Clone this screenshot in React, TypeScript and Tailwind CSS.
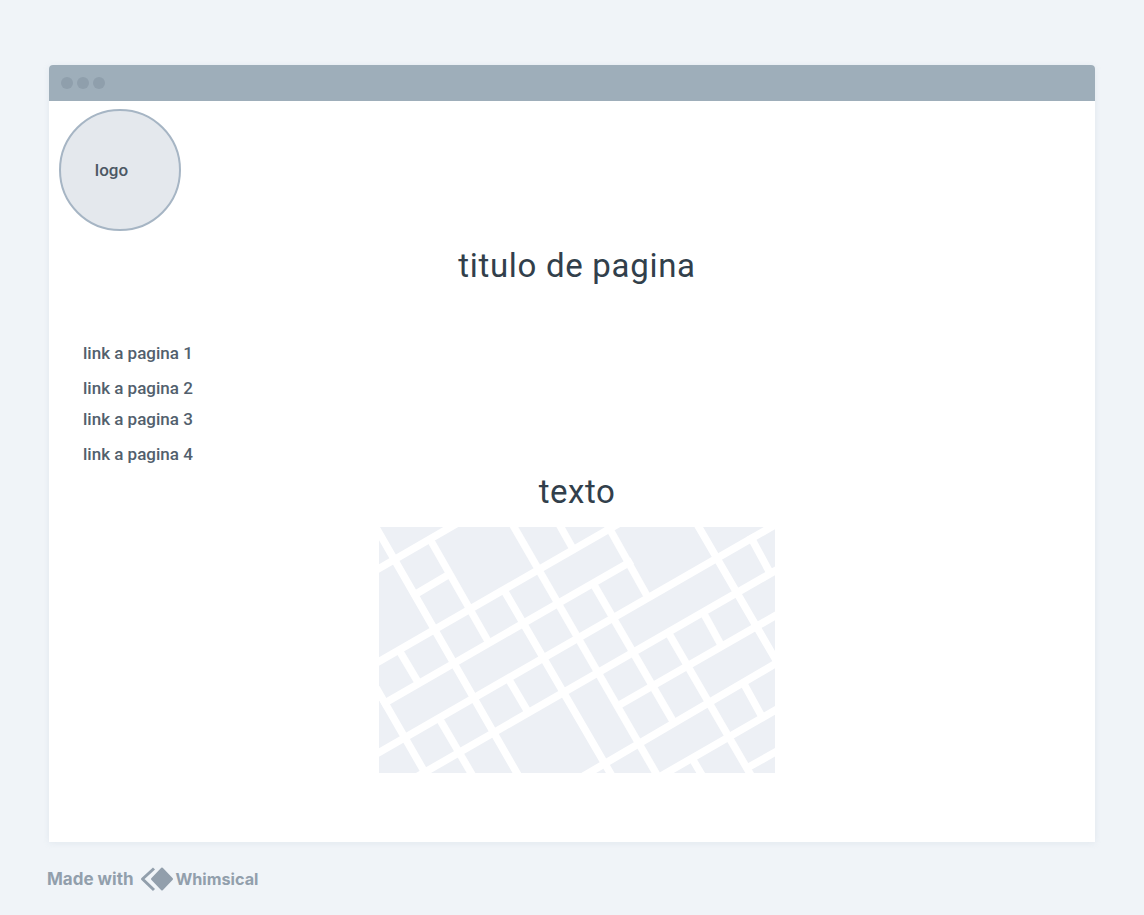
const lines: [number, number, number, number][] = [
  // up-right streets
  [379, 568.5, 456, 524],
  [415, 594.5, 449, 574.5],
  [379, 661.5, 618, 524],
  [385, 703, 629, 562.5],
  [379, 752.5, 780, 522],
  [420, 775, 780, 568],
  [575, 781, 780, 661],
  [660, 776.6, 780, 707.5],
  [748, 767.5, 780, 749.5],
  [618.5, 705.5, 780, 613],
  // down-right streets
  [375.7, 527, 518, 775],
  [431, 541, 488.5, 642],
  [514, 527, 657, 775],
  [559, 524, 573, 549],
  [504.5, 591, 612, 776],
  [608, 526, 646, 594],
  [594, 585, 673.5, 722],
  [697, 524, 780, 667],
  [751.5, 538.5, 769, 571],
  [399.5, 651, 418.5, 683],
  [370, 677, 428, 778],
  [508.5, 679, 528, 712],
  [439.5, 719, 474, 778],
  [668.5, 633, 752, 777],
  [703.5, 613, 721, 645],
  [744, 684, 761, 715],
  [693, 760, 706, 782],
];

const links = [
  { label: "link a pagina 1", cls: "mt-[58px]" },
  { label: "link a pagina 2", cls: "mt-[15px]" },
  { label: "link a pagina 3", cls: "mt-[11px]" },
  { label: "link a pagina 4", cls: "mt-[15px]" },
];

export default function App() {
  return (
    <div className="flex h-[915px] w-[1144px] flex-col overflow-hidden bg-[#f0f4f8] pl-[49px] pt-[65px] font-['Roboto',sans-serif]">
      <div className="flex h-[777px] w-[1046px] flex-col rounded-t-[4px] bg-white shadow-[0_1px_6px_rgba(159,179,200,0.18)]">
        <div className="flex h-[36px] shrink-0 items-center gap-[4px] rounded-t-[4px] bg-[#9eaeba] pl-[12px]">
          <span className="h-[12px] w-[12px] rounded-full bg-[#8f9fac]" />
          <span className="h-[12px] w-[12px] rounded-full bg-[#8f9fac]" />
          <span className="h-[12px] w-[12px] rounded-full bg-[#8f9fac]" />
        </div>
        <div className="relative flex flex-col pl-[10px] pt-[8px]">
          <div className="flex h-[122px] w-[122px] items-center justify-center rounded-full border-[2px] border-[#a6b5c4] bg-[#e4e8ed] pr-[17px] text-[17px] font-medium leading-none text-[#4b5763]">
            logo
          </div>
          <div className="mt-[16px] text-center text-[33px] leading-[38px] tracking-[0.7px] text-[#323f4b]">
            titulo de pagina
          </div>
          <div className="flex flex-col pl-[24px] text-[17px] font-medium leading-[20px] text-[#52606d]">
            {links.map((l) => (
              <div key={l.label} className={l.cls}>
                {l.label}
              </div>
            ))}
          </div>
          <div className="mt-[9px] text-center text-[33px] leading-[38px] tracking-[0.5px] text-[#323f4b]">
            texto
          </div>
          <div className="mt-[16px] flex justify-center">
            <svg
              width="396"
              height="246"
              viewBox="379 527 396 246"
              className="block bg-[#edf0f5]"
            >
              {lines.map((l, i) => (
                <line
                  key={i}
                  x1={l[0]}
                  y1={l[1]}
                  x2={l[2]}
                  y2={l[3]}
                  stroke="#ffffff"
                  strokeWidth="7.5"
                  strokeLinecap="square"
                />
              ))}
            </svg>
          </div>
        </div>
      </div>
      <div className="-ml-[2px] mt-[24px] flex items-center font-['Inter',sans-serif] text-[17px] font-bold leading-none text-[#929fac]">
        <span>Made with</span>
        <svg width="34" height="26" viewBox="0 0 34 26" className="ml-[6px]">
          <path
            d="M14 2.5 L2.5 13 L14 24"
            fill="none"
            stroke="#929fac"
            strokeWidth="3"
            strokeLinejoin="round"
          />
          <path
            d="M22 1 L33 13 L22 25 L11 13 Z"
            fill="#f0f4f8"
            stroke="#f0f4f8"
            strokeWidth="3"
          />
          <path
            d="M22 2.5 L32 13 L22 23.5 L12 13 Z"
            fill="#929fac"
            stroke="#929fac"
            strokeWidth="2"
            strokeLinejoin="round"
          />
        </svg>
        <span className="ml-[2px] text-[16.2px]">Whimsical</span>
      </div>
    </div>
  );
}
